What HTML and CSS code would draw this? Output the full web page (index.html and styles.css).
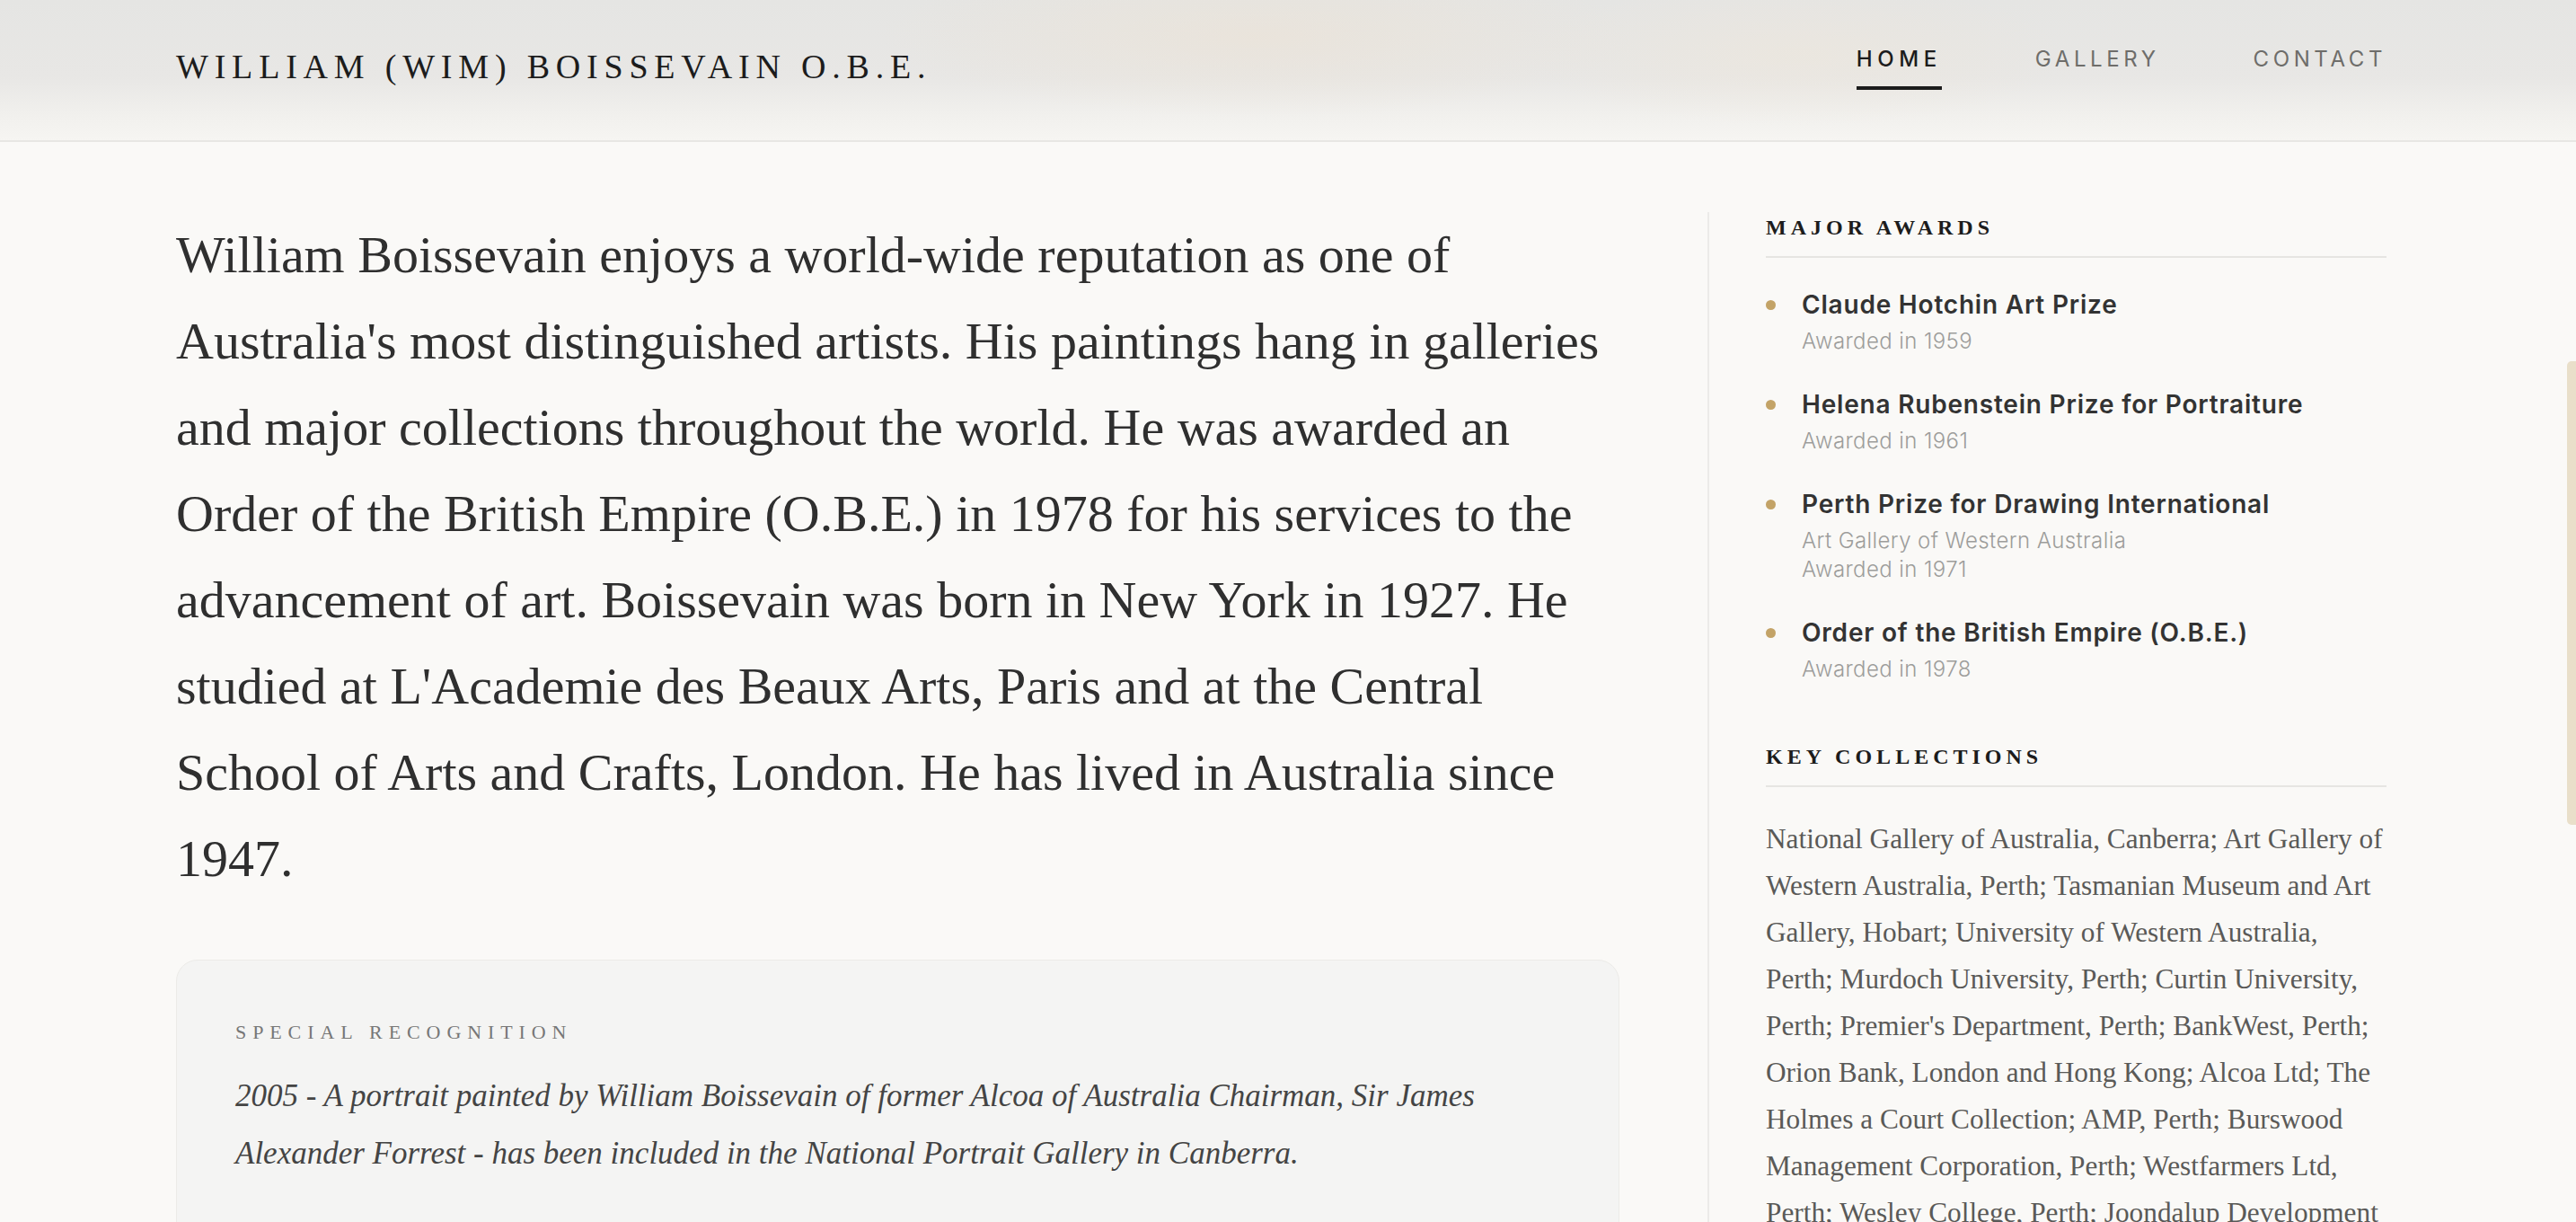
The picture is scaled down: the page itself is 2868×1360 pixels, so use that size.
FILE: index.html
```html
<!DOCTYPE html>
<html lang="en">
<head>
    <meta charset="UTF-8">
    <meta name="viewport" content="width=device-width, initial-scale=1.0">
    <title>William (Wim) Boissevain O.B.E.</title>
    <link rel="stylesheet" href="styles.css">
</head>
<body>

    <header class="site-header">
        <div class="wrap header-inner">
            <a class="brand" href="#">William (Wim) Boissevain O.B.E.</a>
            <nav class="nav">
                <a href="#" class="nav-link active">Home</a>
                <a href="#" class="nav-link">Gallery</a>
                <a href="#" class="nav-link">Contact</a>
            </nav>
        </div>
    </header>

    <main class="wrap about">
        <section class="about-main">
            <p class="intro">William Boissevain enjoys a world-wide reputation as one of Australia's most distinguished artists. His paintings hang in galleries and major collections throughout the world. He was awarded an Order of the British Empire (O.B.E.) in 1978 for his services to the advancement of art. Boissevain was born in New York in 1927. He studied at L'Academie des Beaux Arts, Paris and at the Central School of Arts and Crafts, London. He has lived in Australia since 1947.</p>

            <div class="recognition">
                <h3 class="recognition-title">Special Recognition</h3>
                <p class="recognition-text">2005 - A portrait painted by William Boissevain of former Alcoa of Australia Chairman, Sir James Alexander Forrest - has been included in the National Portrait Gallery in Canberra.</p>
            </div>
        </section>

        <aside class="about-side">
            <h4 class="side-title">Major Awards</h4>
            <ul class="awards">
                <li class="award">
                    <span class="dot"></span>
                    <div>
                        <div class="award-name">Claude Hotchin Art Prize</div>
                        <div class="award-meta">Awarded in 1959</div>
                    </div>
                </li>
                <li class="award">
                    <span class="dot"></span>
                    <div>
                        <div class="award-name">Helena Rubenstein Prize for Portraiture</div>
                        <div class="award-meta">Awarded in 1961</div>
                    </div>
                </li>
                <li class="award">
                    <span class="dot"></span>
                    <div>
                        <div class="award-name">Perth Prize for Drawing International</div>
                        <div class="award-meta">Art Gallery of Western Australia<br>Awarded in 1971</div>
                    </div>
                </li>
                <li class="award">
                    <span class="dot"></span>
                    <div>
                        <div class="award-name">Order of the British Empire (O.B.E.)</div>
                        <div class="award-meta">Awarded in 1978</div>
                    </div>
                </li>
            </ul>

            <h4 class="side-title">Key Collections</h4>
            <p class="collections">National Gallery of Australia, Canberra; Art Gallery of Western Australia, Perth; Tasmanian Museum and Art Gallery, Hobart; University of Western Australia, Perth; Murdoch University, Perth; Curtin University, Perth; Premier's Department, Perth; BankWest, Perth; Orion Bank, London and Hong Kong; Alcoa Ltd; The Holmes a Court Collection; AMP, Perth; Burswood Management Corporation, Perth; Westfarmers Ltd, Perth; Wesley College, Perth; Joondalup Development Corporation; Kerry Stokes Collection.</p>
        </aside>
    </main>

    <div class="scroll-thumb"></div>

</body>
</html>
```

FILE: styles.css
```css
html{background:#faf9f7;}
body{
    margin:0;
    background:#faf9f7;
    color:#2f2f2f;
    font-family:"Liberation Serif", "Times New Roman", serif;
}

.wrap{
    width:2461px;
    margin-left:196px;
}

/* header */
.site-header{
    position:sticky;
    top:0;
    z-index:10;
    height:156px;
    border-bottom:2px solid #e8e7e4;
    background:
        radial-gradient(ellipse 420px 90px at 1400px 40px, rgba(236,226,212,0.55), rgba(236,226,212,0)),
        radial-gradient(ellipse 300px 80px at 2000px 60px, rgba(238,230,218,0.5), rgba(238,230,218,0)),
        linear-gradient(to bottom, #e5e5e3 0%, #e8e7e5 55%, #f1f0ed 82%, #f6f5f2 100%);
}
.header-inner{
    display:flex;
    justify-content:space-between;
    align-items:flex-start;
    padding-top:52px;
}
.brand{
    font-size:38px;
    line-height:1.2;
    letter-spacing:6.8px;
    text-transform:uppercase;
    color:#1c1c1c;
    text-decoration:none;
}
.nav{
    display:flex;
    gap:104px;
}
.nav-link{
    font-family:Inter, "Noto Sans", sans-serif;
    font-size:24px;
    line-height:28px;
    letter-spacing:4.6px;
    text-transform:uppercase;
    text-decoration:none;
    color:#6e6d6a;
    padding-bottom:16px;
    border-bottom:4px solid transparent;
}
.nav-link.active{
    color:#1c1c1c;
    font-weight:500;
    letter-spacing:5.6px;
    border-bottom-color:#1c1c1c;
}

/* content */
.about{
    display:grid;
    grid-template-columns:1607px 1fr;
    gap:98px;
    padding-top:78px;
}
.intro{
    margin:0;
    font-size:58px;
    line-height:96px;
    color:#2f2f2f;
}
.recognition{
    margin-top:64px;
    padding:64px 65px 70px;
    background:#f4f4f3;
    border:1px solid #ecebe8;
    border-radius:24px;
}
.recognition-title{
    margin:0 0 24px;
    font-size:22px;
    line-height:31px;
    font-weight:normal;
    letter-spacing:6.9px;
    text-transform:uppercase;
    color:#777;
}
.recognition-text{
    margin:0;
    font-size:35px;
    line-height:64px;
    font-style:italic;
    color:#444;
}

.about-side{
    border-left:2px solid #ecebe9;
    padding-left:63px;
}
.side-title{
    margin:0;
    padding-bottom:15px;
    border-bottom:2px solid #e6e5e2;
    font-size:24px;
    line-height:34px;
    font-weight:bold;
    letter-spacing:5px;
    text-transform:uppercase;
    color:#1c1c1c;
}
.awards{
    list-style:none;
    margin:34px 0 64px;
    padding:0;
}
.award{
    display:flex;
    gap:29px;
    margin-bottom:36px;
}
.award:last-child{margin-bottom:0;}
.dot{
    flex:none;
    width:11px;
    height:11px;
    margin-top:13px;
    border-radius:50%;
    background:#c3a367;
}
.award-name{
    font-family:Inter, "Noto Sans", sans-serif;
    font-size:28px;
    line-height:36px;
    font-weight:600;
    letter-spacing:0.8px;
    color:#333;
}
.award-meta{
    margin-top:7px;
    font-family:Inter, "Noto Sans", sans-serif;
    font-size:24px;
    line-height:32px;
    font-weight:300;
    letter-spacing:0.4px;
    color:#9d9d9b;
}
.collections{
    margin:32px 0 0;
    font-size:31.3px;
    line-height:52px;
    color:#5a5a58;
}

/* custom scrollbar thumb of the page */
.scroll-thumb{
    position:fixed;
    top:402px;
    right:0;
    width:10px;
    height:516px;
    border-radius:5px 0 0 5px;
    background:#e9dfca;
}
```
